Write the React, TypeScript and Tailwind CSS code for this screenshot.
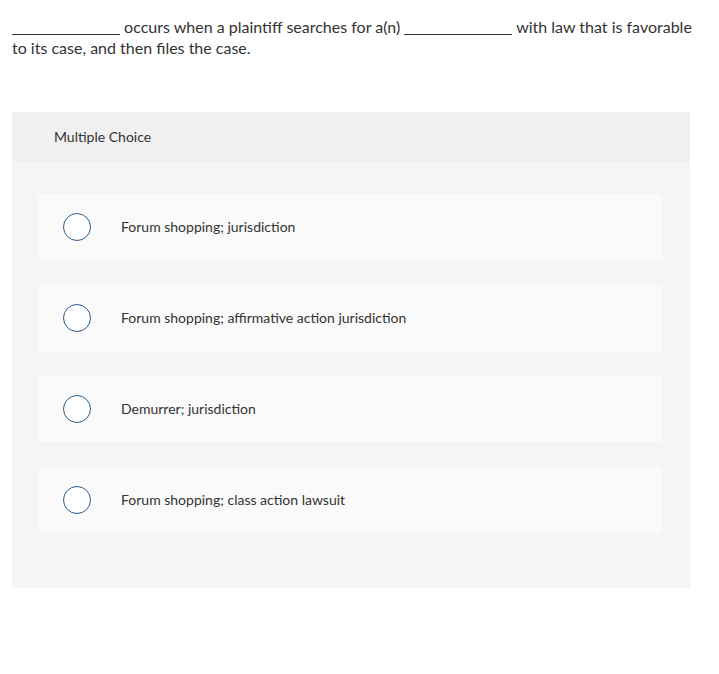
import React from "react";

const options = [
  "Forum shopping; jurisdiction",
  "Forum shopping; affirmative action jurisdiction",
  "Demurrer; jurisdiction",
  "Forum shopping; class action lawsuit",
];

export default function App() {
  return (
    <div className="w-[719px] min-h-[674px] bg-white text-[#333]" style={{ fontFamily: "Lato, 'Open Sans', sans-serif" }}>
      <div className="w-[692px] ml-3 pt-[16px] text-[16px] leading-[21px]">
        <span className="inline-block w-[108px] border-b border-[#333] align-baseline translate-y-[2px]"></span>{" "}
        occurs when a plaintiff searches for a(n){" "}
        <span className="inline-block w-[108px] border-b border-[#333] align-baseline translate-y-[2px]"></span>{" "}
        with law that is favorable to its case, and then files the case.
      </div>
      <div className="w-[678px] ml-3 mt-[54px] rounded-[3px] bg-[#f5f5f5]">
        <div className="h-[50px] rounded-t-[3px] bg-[#f0f0f0] pl-[42px] pb-[1px] flex items-center text-[14px]">
          Multiple Choice
        </div>
        <div className="pl-[26px] pr-[28px] pt-[32px] pb-[55px] flex flex-col gap-[25px]">
          {options.map((o) => (
            <div key={o} className="h-[66px] rounded-[3px] bg-[#fafafa] flex items-center">
              <div className="ml-[25px] w-[28px] h-[28px] rounded-full border-[1.5px] border-[#2b5a8a] bg-white"></div>
              <div className="ml-[30px] pb-[1px] text-[14px]">{o}</div>
            </div>
          ))}
        </div>
      </div>
    </div>
  );
}
